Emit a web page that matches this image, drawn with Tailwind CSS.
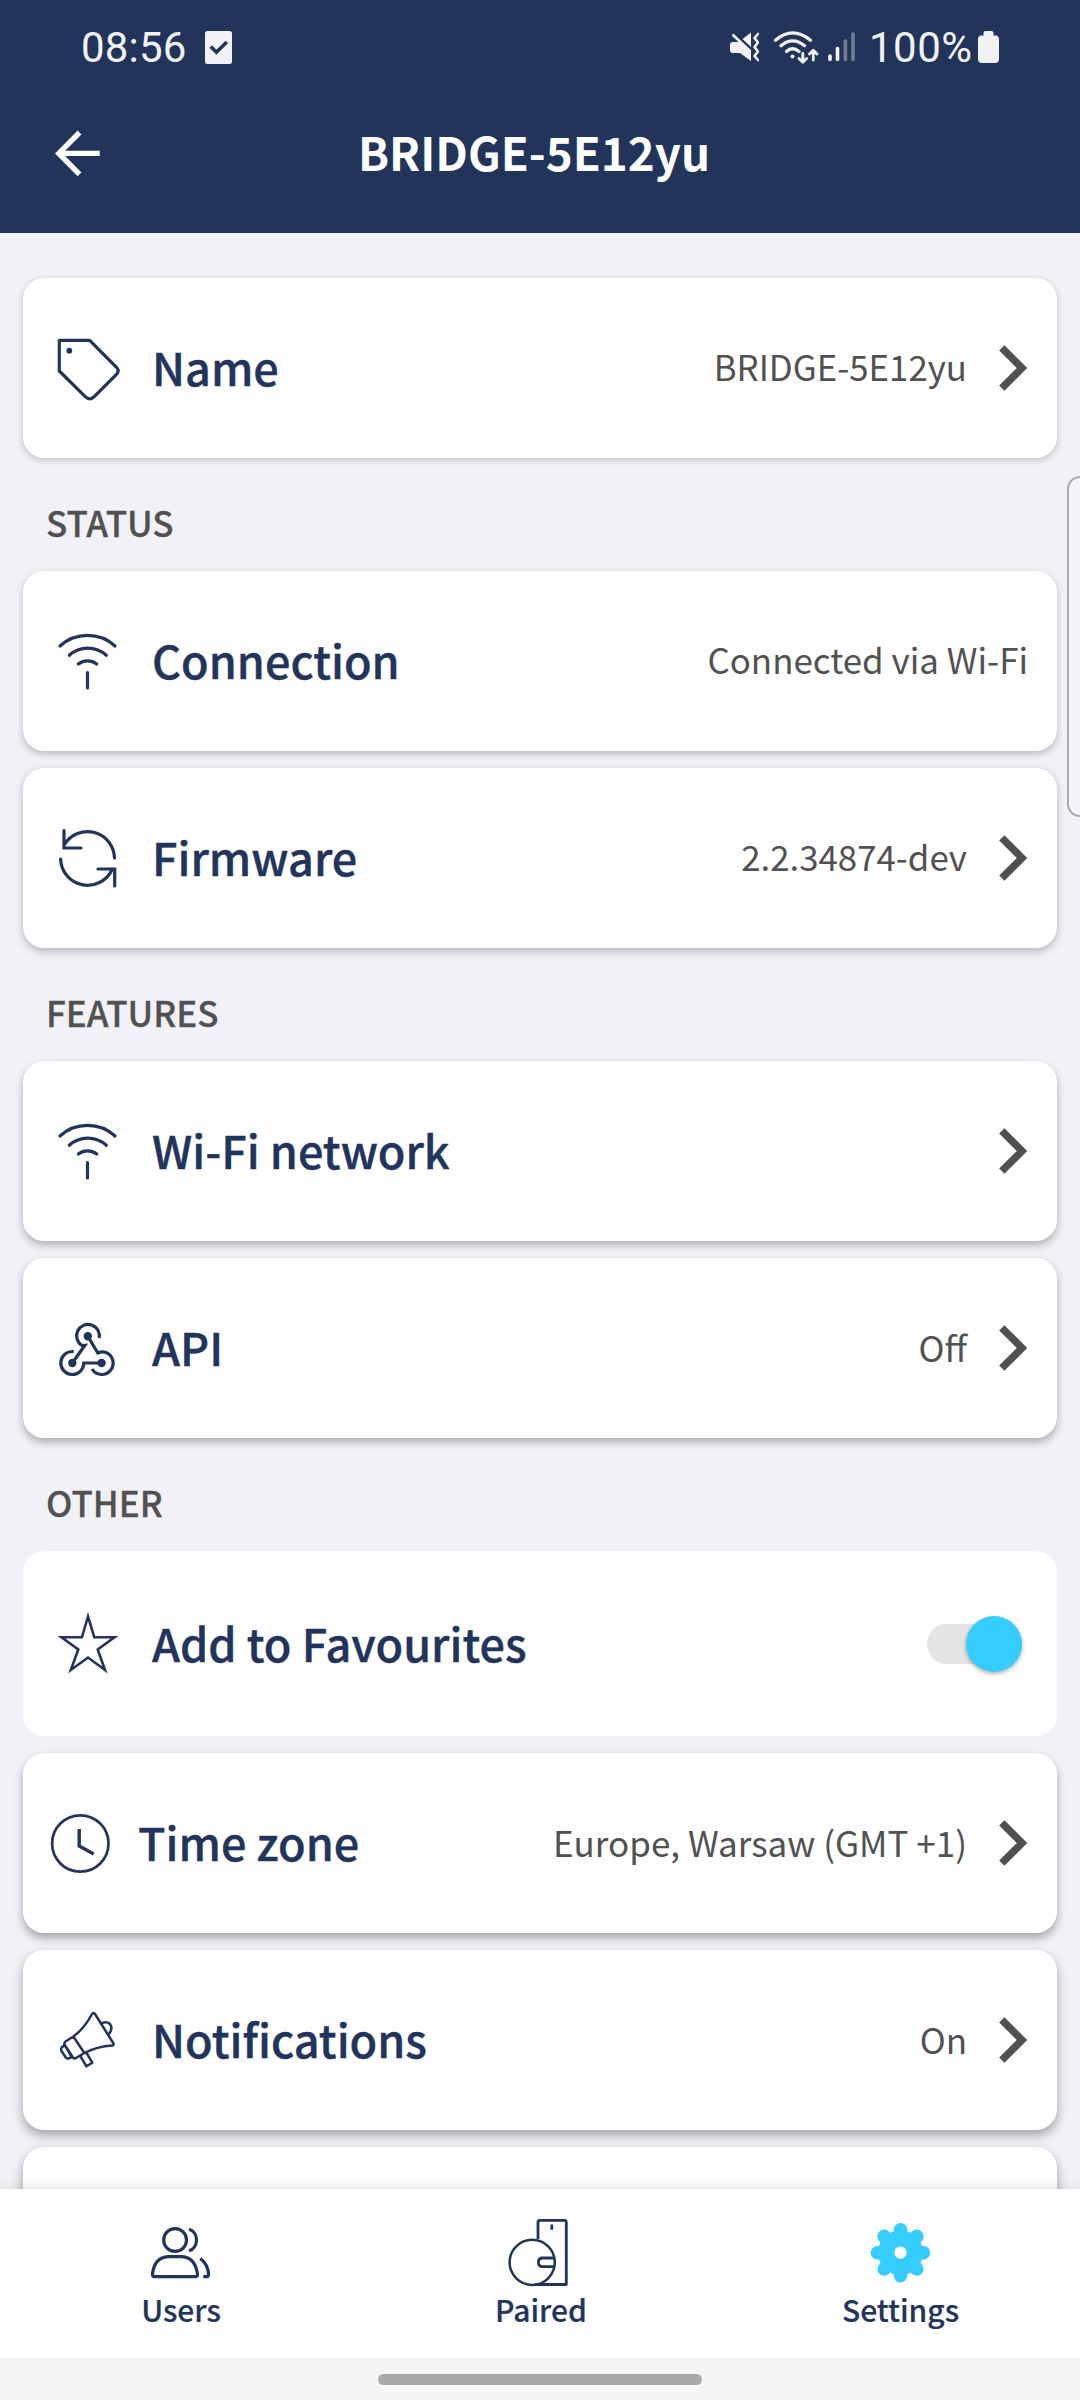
<!DOCTYPE html>
<html lang="en">
<head>
<meta charset="utf-8">
<title>BRIDGE-5E12yu</title>
<script src="https://cdn.jsdelivr.net/npm/@tailwindcss/browser@4"></script>
</head>
<body class="relative flex h-[2400px] w-[1080px] flex-col overflow-hidden bg-[#f2f1f8] font-['Noto_Sans_CJK_SC',sans-serif] text-[#22345b]">

<svg class="hidden">
  <symbol id="wifi" viewBox="0 0 64 64"><path d="M4 17A41 41 0 0 1 59 17M13.3 26.3A27.6 27.6 0 0 1 50.3 26.3M22.3 35A15 15 0 0 1 40.7 35M31.5 43.7V59" fill="none" stroke="currentColor" stroke-width="3.2" stroke-linecap="round"/></symbol>
  <symbol id="chevron" viewBox="0 0 28 46"><path d="M2.8 2.8 23 23 2.8 43.2" fill="none" stroke="#505050" stroke-width="7.4"/></symbol>
</svg>

<header class="h-[233px] shrink-0 bg-[#23345b]">
  <div class="flex h-[94px] items-center pl-[81px] pr-[81px] font-[Roboto,sans-serif] text-[42px] leading-none text-[#f1f2f4]">
    <span class="w-[124px] pt-0.5 tracking-[0.2px]">08:56</span>
    <svg class="h-[33px] w-[27px]" viewBox="0 0 27 33"><rect width="27" height="33" rx="2.5" fill="currentColor"/><path d="M5.8 15.6l5.6 5.6L21.8 11" fill="none" stroke="#23345b" stroke-width="3.6"/></svg>
    <svg class="ml-auto h-[32px] w-[29px]" viewBox="730 32 29 32"><path d="M730 46q0-3 3-3h4l3-1 11 10v10L740 54h-7q-3 0-3-3zM751 33.5V48l-8.500-8z" fill="currentColor"/><path d="M732.500 35.500l18 17" stroke="currentColor" stroke-width="2.600"/><path d="M758 35l-3.500 4 3.500 4.500-3.500 4.500 3.500 4.500-3.500 4.500 3.500 4" fill="none" stroke="currentColor" stroke-width="2.600" stroke-linecap="round" stroke-linejoin="round"/></svg>
    <svg class="ml-[14px] h-[34px] w-[46px]" viewBox="773 30 46 34" fill="none" stroke="currentColor" stroke-width="3.200" stroke-linecap="round" stroke-linejoin="round"><path d="M775.500 40.200Q792.500 25.500 810.500 40.200M781 45.800Q792.500 36 804.500 45.800M786.500 51.500Q792.500 46 799 51.500"/><circle cx="792.500" cy="56.500" r="2" fill="currentColor" stroke="none"/><path d="M802.800 53.500V62M799 58.500l3.800 3.800 3.800-3.800M813.300 60V51M809.500 54l3.800-3.800L817 54" stroke-width="2.800"/></svg>
    <svg class="ml-[9px] h-[32px] w-[28px]" viewBox="828 32 28 32" stroke="currentColor" stroke-width="3.600" stroke-linecap="round"><path d="M830 57v3.500M837.500 49.500v11"/><path d="M845.400 42v18.500M853 35v25.500" opacity=".38"/></svg>
    <span class="ml-[13px] w-[109px] pt-0.5 tracking-[0.5px]">100%</span>
    <svg class="h-[32px] w-[21px]" viewBox="0 0 21 32"><path d="M5.500 4V2q0-2 2-2h6q2 0 2 2v2.500h2q3.500 0 3.500 3.500v20q0 4-4 4H4q-4 0-4-4V8q0-3.500 3.500-3.500h2z" fill="currentColor"/></svg>
  </div>
  <div class="relative flex h-[120px] items-center justify-center">
    <svg class="absolute left-[54px] top-[36px] h-[48px] w-[48px]" viewBox="54 130 48 48" fill="none" stroke="#fff" stroke-width="5.400"><path d="M79.500 132.500 58.800 153.400 79.500 174.300M58.800 153.400H99.700"/></svg>
    <h1 class="pb-1 pr-[12px] text-[45.7px] font-bold leading-none text-white">BRIDGE-5E12yu</h1>
  </div>
</header>

<main class="flex flex-col px-[23px] pt-[45px]">
  <div class="flex h-[180px] items-center rounded-[21px] bg-white pl-[33px] pr-[30px] shadow-[0_2px_7px_rgba(0,0,0,0.22)]">
    <svg class="size-16 overflow-visible" viewBox="0 0 64 64" fill="none" stroke="currentColor" stroke-width="3.200" stroke-linejoin="round"><path d="M3.300 4.300H33.700L60.500 31.300Q63.800 35 60.500 38.300L37.500 61.300Q34 64.500 30 61.300L3.300 35z"/><circle cx="13.300" cy="14.700" r="2.900" fill="currentColor" stroke="none"/></svg>
    <span class="ml-8 pb-1 text-[45px] font-medium leading-none [-webkit-text-stroke:0.4px]">Name</span>
    <span class="ml-auto pb-[3px] text-[34.800px] leading-none text-[#515151]">BRIDGE-5E12yu</span>
    <svg class="ml-8 h-[46px] w-[28px]"><use href="#chevron"/></svg>
  </div>

  <h2 class="flex h-[113px] items-center pl-[23px] pt-[14px] text-[35px] font-medium leading-none text-[#515151] [-webkit-text-stroke:0.3px]">STATUS</h2>
  <div class="flex flex-col gap-[17px]">
    <div class="flex h-[180px] items-center rounded-[21px] bg-white pl-[33px] pr-[29px] shadow-[0_3px_7px_rgba(0,0,0,0.24)]">
      <svg class="size-16"><use href="#wifi"/></svg>
      <span class="ml-8 pb-1 text-[45px] font-medium leading-none [-webkit-text-stroke:0.4px]">Connection</span>
      <span class="ml-auto pb-[3px] text-[34.900px] leading-none text-[#515151]">Connected via Wi-Fi</span>
    </div>
    <div class="flex h-[180px] items-center rounded-[21px] bg-white pl-[33px] pr-[30px] shadow-[0_3px_8px_rgba(0,0,0,0.26)]">
      <svg class="size-16" viewBox="0 0 64 64" fill="none" stroke="currentColor" stroke-width="3.200" stroke-linecap="round"><path d="M8.500 18.500A27 27 0 0 1 58.500 32M8 4.700V22H25M4.600 33A27 27 0 0 0 55.900 44M42 43H58.700V60"/></svg>
      <span class="ml-8 pb-1 text-[45px] font-medium leading-none [-webkit-text-stroke:0.4px]">Firmware</span>
      <span class="ml-auto pb-[3px] text-[34.800px] leading-none text-[#515151]">2.2.34874-dev</span>
      <svg class="ml-8 h-[46px] w-[28px]"><use href="#chevron"/></svg>
    </div>
  </div>

  <h2 class="flex h-[113px] items-center pl-[23px] pt-[14px] text-[35px] font-medium leading-none text-[#515151] [-webkit-text-stroke:0.3px]">FEATURES</h2>
  <div class="flex flex-col gap-[17px]">
    <div class="flex h-[180px] items-center rounded-[21px] bg-white pl-[33px] pr-[30px] shadow-[0_4px_8px_rgba(0,0,0,0.28)]">
      <svg class="size-16"><use href="#wifi"/></svg>
      <span class="ml-8 pb-1 text-[45px] font-medium leading-none [-webkit-text-stroke:0.4px]">Wi-Fi network</span>
      <svg class="ml-auto h-[46px] w-[28px]"><use href="#chevron"/></svg>
    </div>
    <div class="flex h-[180px] items-center rounded-[21px] bg-white pl-[33px] pr-[30px] shadow-[0_4px_9px_rgba(0,0,0,0.3)]">
      <svg class="size-16" viewBox="0 0 64 64" fill="none" stroke="currentColor" stroke-width="3.200"><path d="M43.200 22A11.400 11.400 0 1 0 26 29.500L28.900 29.300 16.300 47M31.800 20.300 41.800 37Q46 35 50 36.500A11.400 11.400 0 1 1 36 53M17.700 35.600A11.500 11.500 0 1 0 27.800 47H45.600"/><g fill="currentColor" stroke="none"><circle cx="31.800" cy="20.300" r="4.200"/><circle cx="16.300" cy="47" r="4.200"/><circle cx="45.600" cy="47" r="4.200"/></g></svg>
      <span class="ml-8 pb-1 text-[45px] font-medium leading-none [-webkit-text-stroke:0.4px]">API</span>
      <span class="ml-auto pb-[3px] text-[35px] leading-none text-[#515151]">Off</span>
      <svg class="ml-8 h-[46px] w-[28px]"><use href="#chevron"/></svg>
    </div>
  </div>

  <h2 class="flex h-[113px] items-center pl-[23px] pt-[14px] text-[35px] font-medium leading-none text-[#515151] [-webkit-text-stroke:0.3px]">OTHER</h2>
  <div class="flex flex-col gap-[17px]">
    <div class="flex h-[185px] items-center rounded-[21px] bg-white pl-[33px] pr-[35px]">
      <svg class="size-16 overflow-visible" viewBox="0 0 64 64" fill="none" stroke="currentColor" stroke-width="2.600"><path d="M32 4.500 38.300 25.300H58.500L41.700 37.500 49 58 32 45.500 14.800 58 22.300 37.500 5.500 25.300H25.900z"/></svg>
      <span class="ml-8 pb-[3px] text-[45px] font-medium leading-none [-webkit-text-stroke:0.4px]">Add to Favourites</span>
      <div class="ml-auto flex h-10 w-[95px] items-center justify-end rounded-full bg-[#e4e4e4]"><div class="size-14 shrink-0 rounded-full bg-[#35cdff] shadow-[0_2px_4px_rgba(0,0,0,0.3)]"></div></div>
    </div>
    <div class="flex h-[180px] items-center rounded-[21px] bg-white pl-[25px] pr-[30px] shadow-[0_5px_10px_rgba(0,0,0,0.32)]">
      <svg class="size-16" viewBox="0 0 64 64" fill="none" stroke="currentColor"><circle cx="32.300" cy="32.500" r="28.200" stroke-width="2.700"/><path d="M31.200 18V35L45.700 43" stroke-width="3.400"/></svg>
      <span class="ml-[26px] pb-1 text-[45px] font-medium leading-none [-webkit-text-stroke:0.4px]">Time zone</span>
      <span class="ml-auto pb-[3px] text-[35px] leading-none text-[#515151]">Europe, Warsaw (GMT +1)</span>
      <svg class="ml-8 h-[46px] w-[28px]"><use href="#chevron"/></svg>
    </div>
    <div class="flex h-[180px] items-center rounded-[21px] bg-white pl-[33px] pr-[30px] shadow-[0_5px_11px_rgba(0,0,0,0.34)]">
      <svg class="size-16" viewBox="0 0 64 64" fill="none" stroke="currentColor" stroke-width="2.500" stroke-linecap="round" stroke-linejoin="round"><path d="M36 6Q37.700 4 39 6L57.500 35.500Q58 37.500 56 37.500Q41 38.500 28.400 45L19.500 50.300Q18 51 17 49.500L8.500 36.500Q8 34.800 9.500 33.500L17.300 28.500Q28 21 36 6zM17.300 28.500 28.400 45M8.500 37 5.800 39.500Q4.500 41 5.500 43L9.800 49.500Q11 51 13 50.300L15.800 49M9 37.500 15.500 48.500M24.600 48.500 30.400 58.300 36.300 54.700 30.300 44.500M44.900 15.800Q50 12.500 54 16Q57.500 21 52.300 26.800"/></svg>
      <span class="ml-8 pb-1 text-[45px] font-medium leading-none [-webkit-text-stroke:0.4px]">Notifications</span>
      <span class="ml-auto pb-[3px] text-[35px] leading-none text-[#515151]">On</span>
      <svg class="ml-8 h-[46px] w-[28px]"><use href="#chevron"/></svg>
    </div>
    <div class="h-[180px] rounded-[21px] bg-white shadow-[0_5px_11px_rgba(0,0,0,0.34)]"></div>
  </div>
</main>

<!-- Edge panel handle -->
<div class="absolute -right-1 top-[476px] h-[341px] w-[17px] rounded-l-[13px] border-2 border-[#a8a8aa] bg-[#f5f4fa]"></div>

<footer class="absolute inset-x-0 bottom-0 h-[211px] bg-white shadow-[0_0_14px_rgba(0,0,0,0.13)]">
  <nav class="grid h-[169px] grid-cols-3 pt-[30px] text-[30px] font-medium leading-none">
    <div class="flex flex-col items-center gap-[11px]">
      <svg class="size-16 overflow-visible" viewBox="0 0 64 64" fill="none" stroke="currentColor" stroke-width="3.200" stroke-linejoin="round"><circle cx="27.100" cy="21" r="11.400"/><path d="M41 10.200C51 13 51 29 41 31.800M20 37.700H34Q47 38.500 49.500 55Q49.500 57.700 47.500 57.700H6.500Q4.500 57.700 4.500 55Q6.500 38.500 20 37.700zM52.300 39.500Q60.500 46 60.500 55.500Q60.500 57.700 58.500 57.700H55.300"/></svg>
      <span class="pl-0.5 [-webkit-text-stroke:0.2px]">Users</span>
    </div>
    <div class="flex flex-col items-center gap-[11px]">
      <svg class="size-16 overflow-visible" viewBox="0 0 64 64" fill="none" stroke="currentColor" stroke-width="2.800" stroke-linejoin="round"><circle cx="24.200" cy="43.300" r="22.600" stroke-width="2.500"/><path d="M30 20V3.300Q30 1.300 32 1.300H56.300Q58.300 1.300 58.300 3.300V65.500H27M46.500 39H34.500Q30.400 39 30.400 43.300Q30.400 47.700 34.500 47.700H46.500M43.800 5.500V10.700" stroke-width="2.800"/></svg>
      <span class="pl-0.5 [-webkit-text-stroke:0.2px]">Paired</span>
    </div>
    <div class="flex flex-col items-center gap-[11px]">
      <svg class="size-16 overflow-visible" viewBox="0 0 64 64"><g stroke="#35cdff" stroke-width="13.600" stroke-linecap="round"><path d="M32.500 10.700V56.700M9.500 33.700H55.500M16.200 17.400 48.800 50M48.800 17.400 16.200 50"/></g><circle cx="32.500" cy="33.700" r="22.500" fill="#35cdff"/><circle cx="32.500" cy="33.700" r="6.200" fill="#fff"/></svg>
      <span class="pl-px [-webkit-text-stroke:0.2px]">Settings</span>
    </div>
  </nav>
  <div class="flex h-[42px] justify-center bg-[#f5f5f8] pt-4"><div class="h-[11px] w-[324px] rounded-full bg-[#a9a9a9]"></div></div>
</footer>
</body>
</html>
